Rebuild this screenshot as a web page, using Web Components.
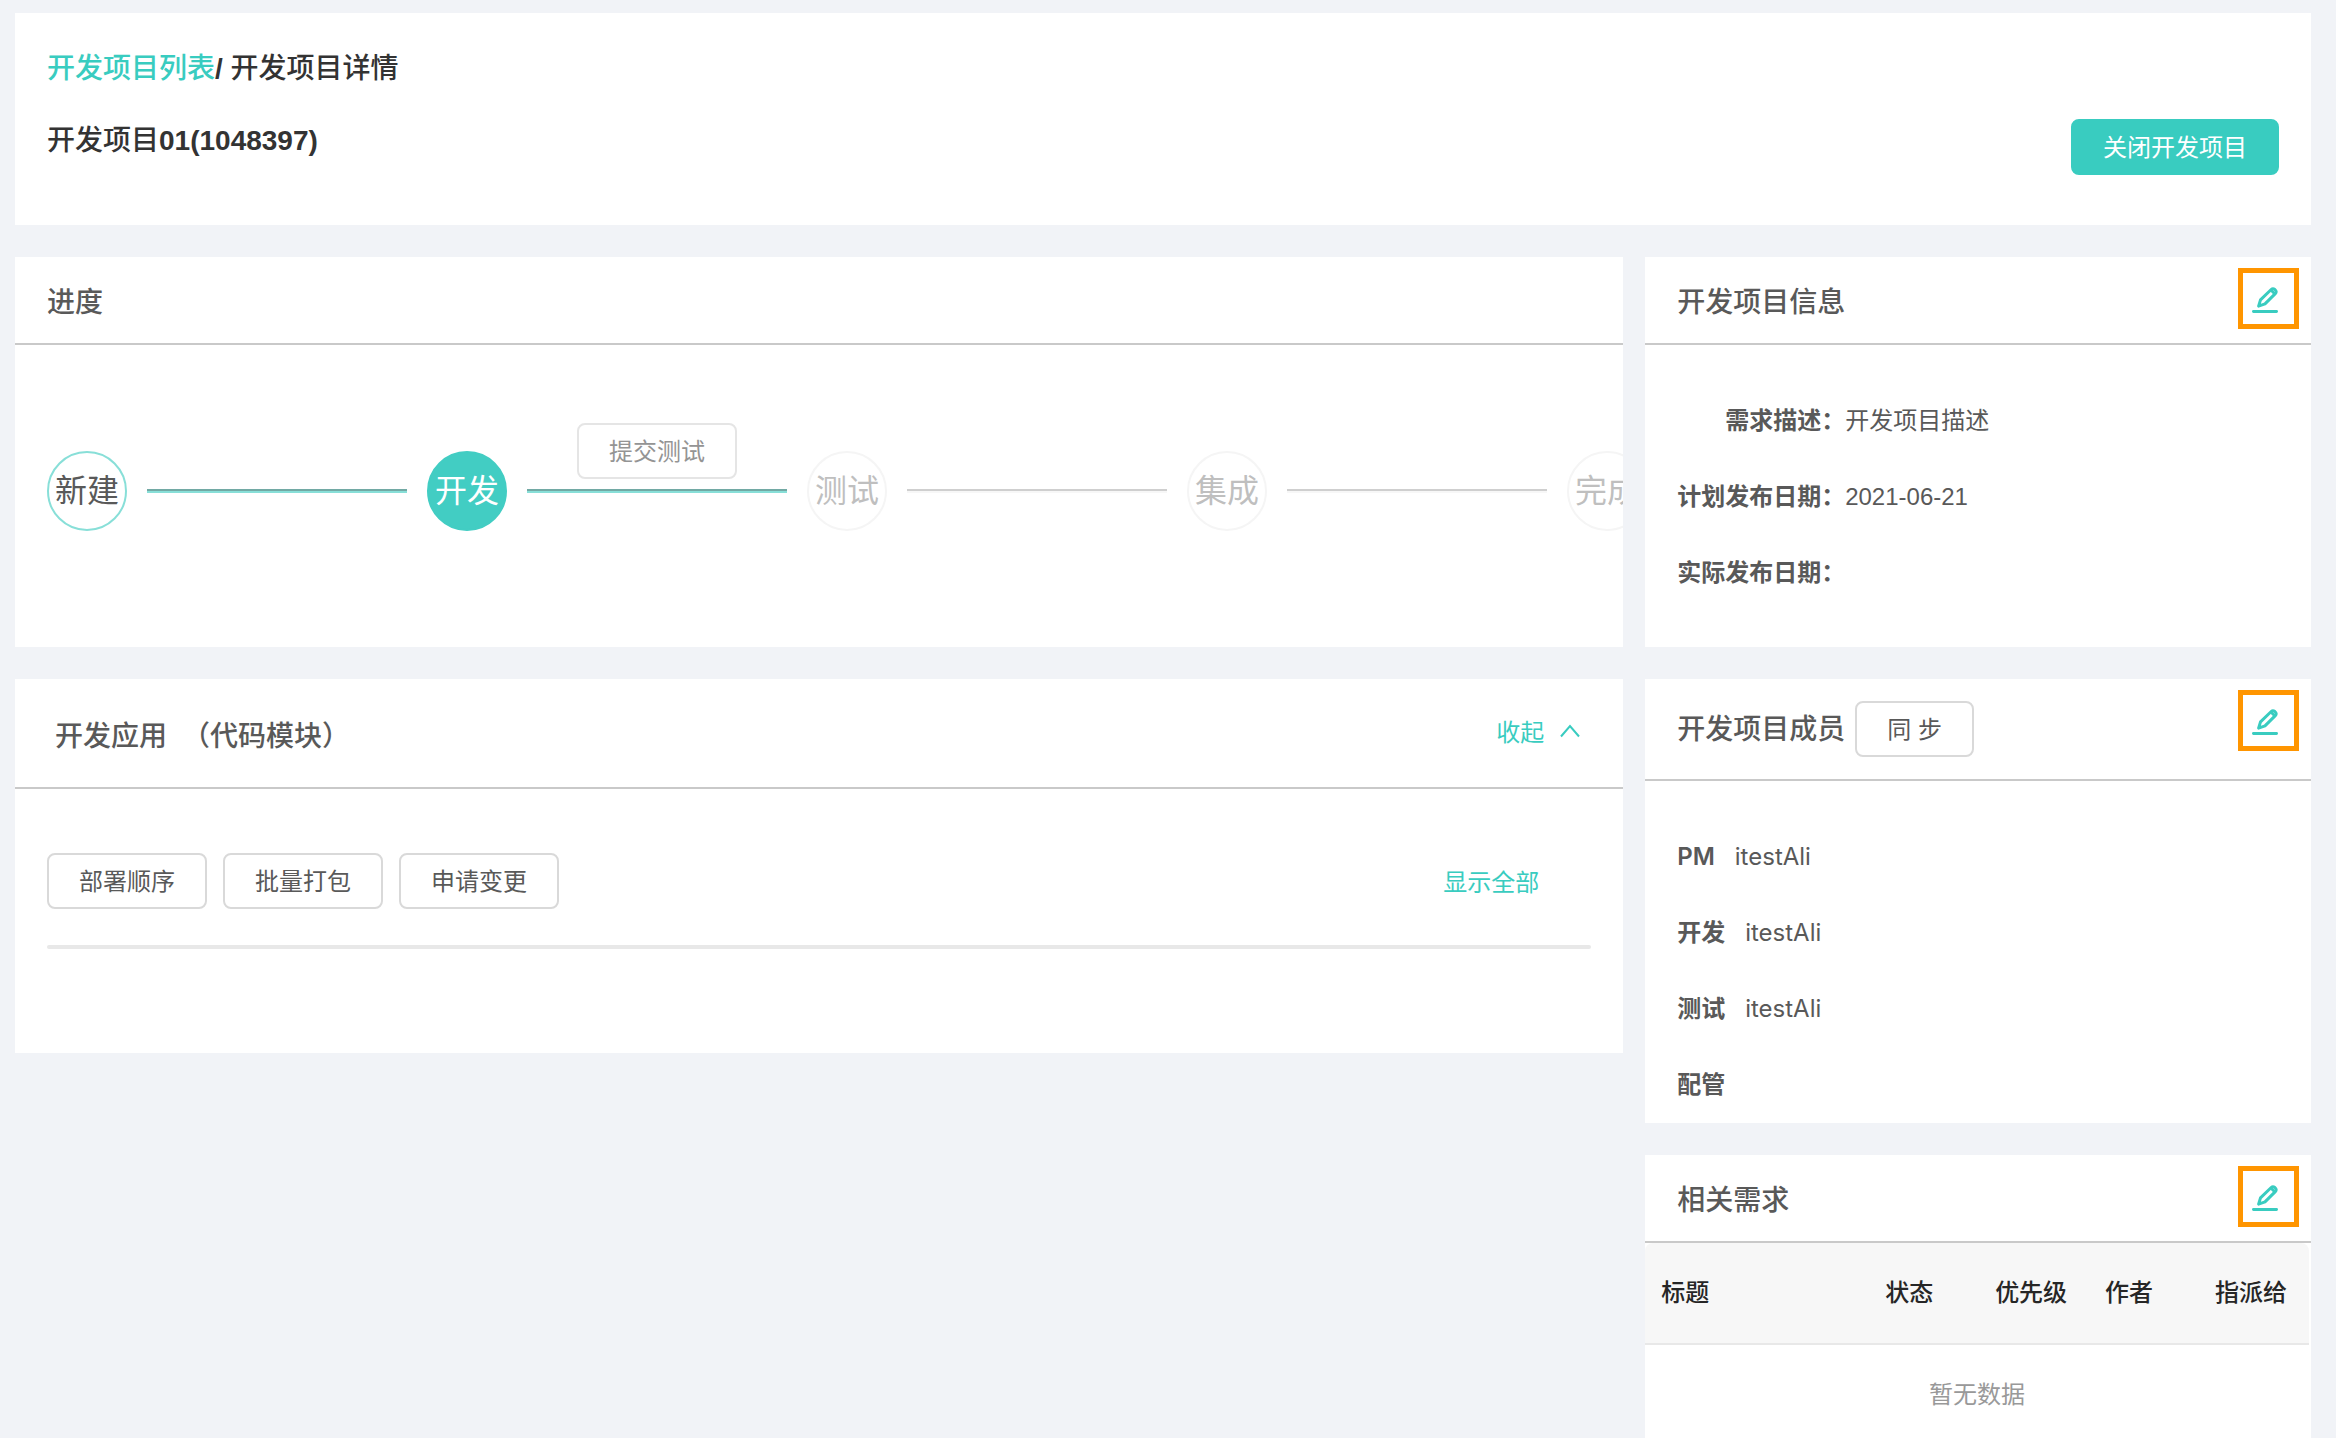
<!DOCTYPE html>
<html lang="zh-CN">
<head>
<meta charset="utf-8">
<title>开发项目详情</title>
<style>
  html, body { height: 100%; margin: 0; }
  body {
    --teal: #39ccc0; --text: #595959; --rule: #c9c9c9;
    background: #f1f3f7; color: var(--text); overflow: hidden;
    font: 24px/36px Inter, "Noto Sans CJK SC", sans-serif;
  }
</style>
</head>
<body>
<project-page></project-page>
<script>
const define = (name, html, setup) => customElements.define(name, class extends HTMLElement {
  constructor() {
    super();
    const t = document.createElement('template');
    t.innerHTML = html;
    this.attachShadow({ mode: 'open' }).append(t.content.cloneNode(true));
  }
  connectedCallback() { if (setup) setup(this, this.shadowRoot); }
});

define('ui-button', `
<style>
  :host { display: inline-block; }
  button { display: block; box-sizing: border-box; height: 56px; padding: 2px 30px 0; border: 2px solid #d9d9d9;
    border-radius: 8px; background: #fff; color: inherit; font: inherit; line-height: 50px; white-space: nowrap; cursor: pointer; }
  :host([primary]) button { background: var(--teal); border-color: var(--teal); color: #fff; }
  :host([muted]) button { border-color: #e5e5e5; color: #949494; }
</style>
<button type="button"><slot></slot></button>`);

define('edit-button', `
<style>
  :host { display: block; }
  button { display: flex; align-items: center; justify-content: center; box-sizing: border-box; width: 61px; height: 61px;
    padding: 2px 8px 0 0; border: 5px solid #ff9500; background: none; color: var(--teal); cursor: pointer; }
  svg { display: block; flex: none; }
</style>
<button type="button" aria-label="编辑">
  <svg width="26" height="26" viewBox="0 0 26 26" fill="none" stroke="currentColor" stroke-linecap="round" stroke-linejoin="round">
    <path d="M6.6 19.1 L8.5 12.9 L19.2 2.5 Q20.9 .9 22.8 2.5 L23.3 3 Q25 4.8 23.3 6.6 L13 16.9 Z" stroke-width="3"/>
    <path d="M19.4 3.6 L22.6 6.8" stroke-width="2.8"/>
    <path d="M1.4 24.5 H24.6" stroke-width="2.8"/>
  </svg>
</button>`);

define('page-head', `
<style>
  :host { display: grid; row-gap: 28px; padding: 34px 32px 50px; background: #fff; color: #333;
    font-family: "Liberation Sans", "Noto Sans CJK SC", sans-serif; font-size: 28px; font-weight: 500; line-height: 44px; }
  nav, h1 { margin: 0; font: inherit; }
  a { color: var(--teal); text-decoration: none; }
  b { font-weight: 700; }
  .row { display: flex; justify-content: space-between; align-items: flex-start; }
  ui-button { font-size: 24px; font-weight: 400; }
</style>
<nav aria-label="面包屑"><a href="#list">开发项目列表</a><b>/ </b><span>开发项目详情</span></nav>
<div class="row"><h1>开发项目<b>01(1048397)</b></h1><ui-button primary>关闭开发项目</ui-button></div>`);

define('info-card', `
<style>
  :host { display: block; background: #fff; overflow: hidden; }
  header { display: flex; align-items: center; min-height: 86px; padding: 0 12px 0 32px; border-bottom: 2px solid var(--rule); }
  :host([tall]) header { min-height: 100px; }
  :host([taller]) header { min-height: 108px; padding: 0 43px 0 40px; }
  .title { display: flex; align-items: center; gap: 10px; flex: 1; padding-top: 3px; }
  :host([tall]) .title { padding: 0; }
  :host([taller]) .title { padding-top: 5px; }
  h2 { margin: 0; font-size: 28px; font-weight: 500; white-space: pre; }
  .extra { align-self: flex-start; padding-top: 11px; }
  :host([taller]) .extra { align-self: center; padding: 0; }
</style>
<header><div class="title"><h2></h2><slot name="action"></slot></div><div class="extra"><slot name="extra"></slot></div></header>
<slot></slot>`, (el, root) => { root.querySelector('h2').textContent = el.getAttribute('heading'); });

define('step-node', `
<style>
  :host { display: flex; align-items: center; justify-content: center; flex: none; box-sizing: border-box; width: 80px; height: 80px;
    border: 2px solid #f5f5f5; border-radius: 50%; color: #bfbfbf; font-size: 32px; white-space: nowrap; }
  :host([state=done]) { border-color: #88dfd8; color: #595959; }
  :host([state=active]) { border-color: #42cdc3; background: #42cdc3; color: #fff; }
</style>
<slot></slot>`);

define('step-line', `
<style>
  :host { display: grid; flex: none; grid-template-rows: 1fr 4px 1fr; width: 260px; align-self: stretch; }
  hr { grid-row: 2; width: 100%; height: 0; margin: 0; box-sizing: border-box; border: 0 solid; border-width: 2px 0;
    border-color: #cfcfcf #f7f7f7 #f7f7f7 #cfcfcf; }
  :host([done]) hr { border-color: #72a9a4 #88dfd8 #88dfd8 #72a9a4; }
  div { grid-row: 1; align-self: end; justify-self: center; padding-bottom: 10px; }
</style>
<div><slot></slot></div><hr>`);

define('progress-steps', `
<style>
  :host { display: flex; align-items: center; gap: 20px; height: 136px; padding: 78px 0 88px 32px; }
</style>
<step-node state="done">新建</step-node><step-line done></step-line>
<step-node state="active">开发</step-node><step-line done><ui-button muted>提交测试</ui-button></step-line>
<step-node>测试</step-node><step-line></step-line>
<step-node>集成</step-node><step-line></step-line>
<step-node>完成</step-node>`);

define('collapse-toggle', `
<style>
  button { display: flex; align-items: center; gap: 16px; padding: 0; border: 0; background: none; color: var(--teal); font: inherit; cursor: pointer; }
  :host { display: block; }
  svg { margin-bottom: 4px; }
</style>
<button type="button" aria-expanded="true"><span>收起</span>
<svg width="20" height="14" viewBox="0 0 20 14" fill="none" stroke="currentColor" stroke-width="2"><path d="M1 12.5 L10 2 L19 12.5"/></svg></button>`);

define('app-list', `
<style>
  :host { display: block; padding: 64px 32px 104px; }
  .bar { display: flex; align-items: center; gap: 16px; padding-bottom: 36px; }
  a { margin-left: auto; margin-right: 52px; padding-top: 3px; color: var(--teal); text-decoration: none; }
  .rule { height: 4px; border-radius: 2px; background: #e8e8e8; }
</style>
<div class="bar"><ui-button>部署顺序</ui-button><ui-button>批量打包</ui-button><ui-button>申请变更</ui-button><a href="#all">显示全部</a></div>
<div class="rule"></div>`);

define('project-facts', `
<style>
  dl { display: grid; grid-template-columns: max-content 1fr; row-gap: 40px; margin: 0; padding: 58px 32px 56px; }
  dt { text-align: right; font-weight: 700; }
  dd { margin: 0; }
  :host { display: block; }
  .num { font-family: "Liberation Sans", sans-serif; }
</style>
<dl><dt>需求描述：</dt><dd>开发项目描述</dd><dt>计划发布日期：</dt><dd class="num">2021-06-21</dd><dt>实际发布日期：</dt><dd></dd></dl>`);

define('member-list', `
<style>
  :host { display: block; }
  dl { display: grid; row-gap: 40px; margin: 0; padding: 58px 32px 20px; }
  div { display: flex; gap: 20px; }
  dt { font-weight: 700; }
  dt.latin { font-weight: 600; }
  dd { margin: 0; }
</style>
<dl><div><dt class="latin">PM</dt><dd>itestAli</dd></div><div><dt>开发</dt><dd>itestAli</dd></div><div><dt>测试</dt><dd>itestAli</dd></div><div><dt>配管</dt><dd></dd></div></dl>`);

define('demand-table', `
<style>
  :host { display: block; padding-right: 2px; }
  table { width: 100%; table-layout: fixed; border-collapse: separate; border-spacing: 0; }
  th { box-sizing: border-box; height: 102px; padding: 0 16px; border-bottom: 2px solid #e8e8e8; background: #f7f7f7; color: #262626;
    font-weight: 500; text-align: left; white-space: nowrap; }
  th:first-child { width: 224px; border-top-left-radius: 8px; }
  th:last-child { border-top-right-radius: 8px; }
  td { padding: 32px 16px; color: #999; text-align: center; }
</style>
<table><thead><tr><th>标题</th><th>状态</th><th>优先级</th><th>作者</th><th>指派给</th></tr></thead>
<tbody><tr><td colspan="5">暂无数据</td></tr></tbody></table>`);

define('project-page', `
<style>
  :host { display: grid; gap: 32px; padding: 13px 25px 0 15px; }
  main { display: grid; grid-template-columns: minmax(0, 1fr) 29%; gap: 22px; align-items: start; }
  .col { display: grid; gap: 32px; }
</style>
<page-head></page-head>
<main>
  <div class="col">
    <info-card heading="进度"><progress-steps></progress-steps></info-card>
    <info-card taller heading="开发应用  （代码模块）"><collapse-toggle slot="extra"></collapse-toggle><app-list></app-list></info-card>
  </div>
  <div class="col">
    <info-card heading="开发项目信息"><edit-button slot="extra"></edit-button><project-facts></project-facts></info-card>
    <info-card tall heading="开发项目成员"><ui-button slot="action">同 步</ui-button><edit-button slot="extra"></edit-button><member-list></member-list></info-card>
    <info-card heading="相关需求"><edit-button slot="extra"></edit-button><demand-table></demand-table></info-card>
  </div>
</main>`);
</script>
</body>
</html>
